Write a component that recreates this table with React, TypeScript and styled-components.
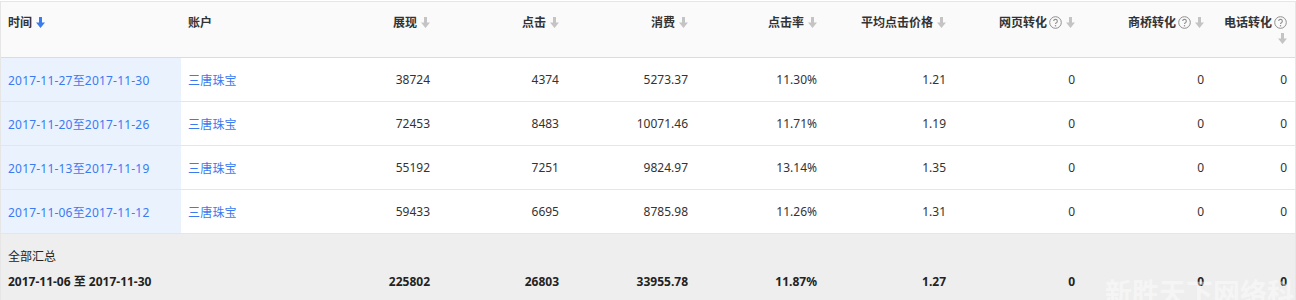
import React from 'react';
import styled, { createGlobalStyle } from 'styled-components';

const GlobalStyle = createGlobalStyle`
  html, body {
    margin: 0;
    padding: 0;
    background: #ffffff;
  }
  body {
    padding-top: 1px;
    font-family: 'Noto Sans', 'Noto Sans CJK SC', sans-serif;
    font-size: 12px;
    color: #333333;
    overflow: hidden;
  }
`;

const Frame = styled.div`
  position: relative;
  width: 1294px;
  border: 1px solid #e6e6e6;
  border-bottom: 0;
  height: 299px;
  overflow: hidden;
  background: #eeeeee;
`;

const Table = styled.table`
  width: 1294px;
  border-collapse: collapse;
  table-layout: fixed;
`;

const HeadCell = styled.th<{ $align?: 'left' | 'right' }>`
  background: #fafafa;
  text-align: ${(p) => p.$align || 'right'};
  vertical-align: top;
  font-weight: 700;
  line-height: 16px;
  padding: 13px 8px 10px 7px;
  height: 32px;
  border-bottom: 1px solid #dcdcdc;
  color: #333333;
  white-space: normal;
`;

const Row = styled.tr`
  background: #ffffff;
`;

const Cell = styled.td<{ $align?: 'left' | 'right'; $active?: boolean }>`
  height: 43px;
  padding: 0 8px 0 7px;
  text-align: ${(p) => p.$align || 'right'};
  vertical-align: middle;
  border-bottom: 1px solid #e6e6e6;
  background: ${(p) => (p.$active ? '#eaf2fe' : 'transparent')};
  color: #333333;
`;

const Link = styled.a`
  color: #3a7bf0;
  text-decoration: none;
  cursor: pointer;
  letter-spacing: 0.2px;
`;

const FootCell = styled.td<{ $align?: 'left' | 'right' }>`
  background: #eeeeee;
  padding: 14px 8px 10px 7px;
  text-align: ${(p) => p.$align || 'right'};
  vertical-align: bottom;
  font-weight: 700;
  line-height: 17px;
  color: #222222;
`;

const FootLabel = styled.div`
  font-weight: 400;
  margin-bottom: 8px;
  color: #222222;
`;

const SortIcon = styled.svg`
  display: inline-block;
  vertical-align: -1px;
  margin-left: 4px;
`;

const HelpIcon = styled.svg`
  display: inline-block;
  vertical-align: -2px;
  margin-left: 2px;
`;

const Watermark = styled.div`
  position: absolute;
  left: 1104px;
  top: 270px;
  font-family: 'Noto Sans CJK SC', sans-serif;
  font-size: 27px;
  font-weight: 700;
  color: rgba(255, 255, 255, 0.45);
  white-space: nowrap;
  pointer-events: none;
`;

const Arrow = ({ active }: { active?: boolean }) => (
  <SortIcon width="9" height="11" viewBox="0 0 9 11">
    <path d="M3 0h3v5.5h3L4.5 11 0 5.5h3z" fill={active ? '#3a7bf0' : '#c4c4c4'} />
  </SortIcon>
);

const Help = () => (
  <HelpIcon width="13" height="13" viewBox="0 0 13 13">
    <circle cx="6.5" cy="6.5" r="5.8" fill="none" stroke="#8f8f8f" strokeWidth="1" />
    <path
      d="M4.7 5.1a1.8 1.8 0 1 1 2.7 1.6c-.6.3-.9.7-.9 1.4"
      fill="none"
      stroke="#8f8f8f"
      strokeWidth="1.1"
    />
    <circle cx="6.5" cy="9.7" r=".75" fill="#8f8f8f" />
  </HelpIcon>
);

type RowData = {
  range: string;
  show: string;
  click: string;
  cost: string;
  ctr: string;
  cpc: string;
};

const rows: RowData[] = [
  { range: '2017-11-27至2017-11-30', show: '38724', click: '4374', cost: '5273.37', ctr: '11.30%', cpc: '1.21' },
  { range: '2017-11-20至2017-11-26', show: '72453', click: '8483', cost: '10071.46', ctr: '11.71%', cpc: '1.19' },
  { range: '2017-11-13至2017-11-19', show: '55192', click: '7251', cost: '9824.97', ctr: '13.14%', cpc: '1.35' },
  { range: '2017-11-06至2017-11-12', show: '59433', click: '6695', cost: '8785.98', ctr: '11.26%', cpc: '1.31' },
];

const widths = [180, 128, 129, 129, 129, 129, 129, 129, 129, 83];

export default function App() {
  return (
    <>
      <GlobalStyle />
      <Frame>
        <Table>
          <colgroup>
            {widths.map((w, i) => (
              <col key={i} style={{ width: w }} />
            ))}
          </colgroup>
          <thead>
            <tr>
              <HeadCell $align="left">
                时间
                <Arrow active />
              </HeadCell>
              <HeadCell $align="left">账户</HeadCell>
              <HeadCell>
                展现
                <Arrow />
              </HeadCell>
              <HeadCell>
                点击
                <Arrow />
              </HeadCell>
              <HeadCell>
                消费
                <Arrow />
              </HeadCell>
              <HeadCell>
                点击率
                <Arrow />
              </HeadCell>
              <HeadCell>
                平均点击价格
                <Arrow />
              </HeadCell>
              <HeadCell>
                网页转化
                <Help />
                <Arrow />
              </HeadCell>
              <HeadCell>
                商桥转化
                <Help />
                <Arrow />
              </HeadCell>
              <HeadCell>
                电话转化
                <Help />
                <Arrow />
              </HeadCell>
            </tr>
          </thead>
          <tbody>
            {rows.map((r) => (
              <Row key={r.range}>
                <Cell $align="left" $active>
                  <Link>{r.range}</Link>
                </Cell>
                <Cell $align="left">
                  <Link>三唐珠宝</Link>
                </Cell>
                <Cell>{r.show}</Cell>
                <Cell>{r.click}</Cell>
                <Cell>{r.cost}</Cell>
                <Cell>{r.ctr}</Cell>
                <Cell>{r.cpc}</Cell>
                <Cell>0</Cell>
                <Cell>0</Cell>
                <Cell>0</Cell>
              </Row>
            ))}
            <tr>
              <FootCell $align="left" colSpan={2}>
                <FootLabel>全部汇总</FootLabel>
                2017-11-06 至 2017-11-30
              </FootCell>
              <FootCell>225802</FootCell>
              <FootCell>26803</FootCell>
              <FootCell>33955.78</FootCell>
              <FootCell>11.87%</FootCell>
              <FootCell>1.27</FootCell>
              <FootCell>0</FootCell>
              <FootCell>0</FootCell>
              <FootCell>0</FootCell>
            </tr>
          </tbody>
        </Table>
        <Watermark>新胜天下网络科技</Watermark>
      </Frame>
    </>
  );
}
